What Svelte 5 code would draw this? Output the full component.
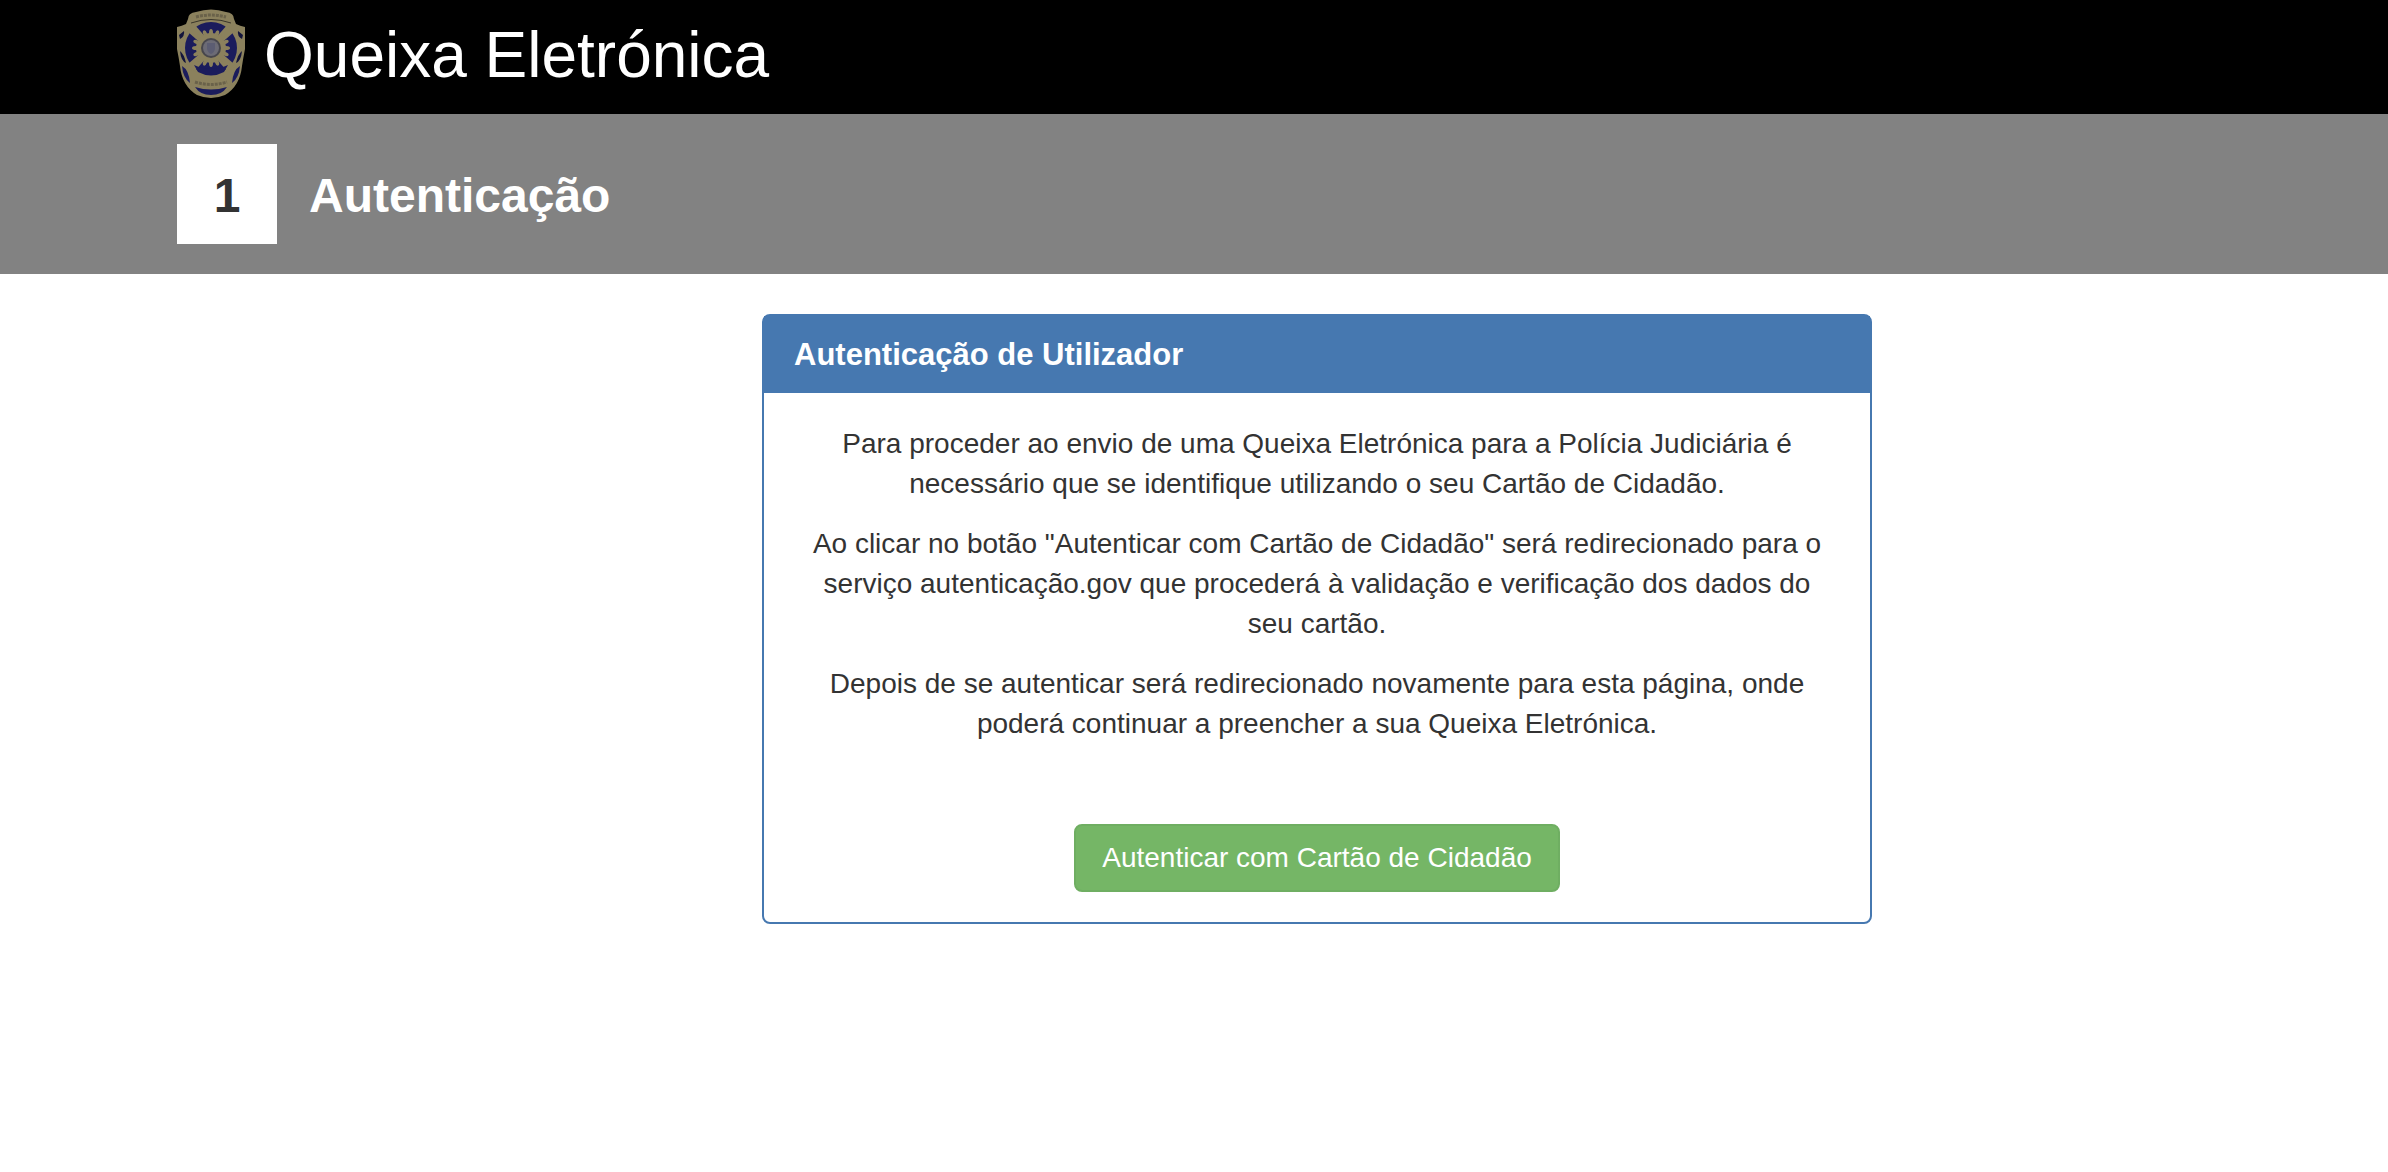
<script lang="ts">
  const step = { number: 1, title: 'Autenticação' };

  const paragraphs: string[] = [
    'Para proceder ao envio de uma Queixa Eletrónica para a Polícia Judiciária é necessário que se identifique utilizando o seu Cartão de Cidadão.',
    'Ao clicar no botão "Autenticar com Cartão de Cidadão" será redirecionado para o serviço autenticação.gov que procederá à validação e verificação dos dados do seu cartão.',
    'Depois de se autenticar será redirecionado novamente para esta página, onde poderá continuar a preencher a sua Queixa Eletrónica.'
  ];

  // Angles of the rosette in the middle of the badge
  const arms = [45, 135, 225, 315];
  const petals = Array.from({ length: 16 }, (_, i) => i * 22.5);
</script>

<svelte:head>
  <title>Queixa Eletrónica</title>
</svelte:head>

<header class="navbar">
  <svg class="badge" viewBox="0 0 70 90" aria-hidden="true">
    <path
      d="M12 11 Q12 5 20 4 Q35 -1 50 4 Q58 5 58 11 L60 16 Q64 18 69 19 L69 41 Q67 51 66 58 Q64 78 49 87 Q35 93 21 87 Q6 78 4 58 Q3 51 1 41 L1 19 Q6 18 10 16 Z"
      fill="#8b815d"
    />
    <!-- Shield field and rosette -->
    <ellipse cx="35" cy="40" rx="26" ry="26" fill="#1b1c5c" />
    <g fill="#8b815d">
      {#each arms as angle}
        <path d="M31 26 L30 12 L40 12 L39 26 Z" transform="rotate({angle} 35 40)" />
      {/each}
      {#each petals as angle}
        <ellipse cx="35" cy="25" rx="2" ry="4" transform="rotate({angle} 35 40)" />
      {/each}
      <circle cx="35" cy="40" r="15" />
    </g>
    <circle cx="35" cy="40" r="10" fill="#47464c" />
    <circle cx="35" cy="40" r="8" fill="#6c6b75" />
    <path d="M31 35 H39 V41 Q38 45 35 46 Q32 45 31 41 Z" fill="#5c5d72" />
    <!-- Banners -->
    <path d="M20 9 Q35 5 50 9" fill="none" stroke="#6a624a" stroke-width="3" stroke-dasharray="3 1" />
    <path d="M15 15 Q35 8 55 15" fill="none" stroke="#39352a" stroke-width="1" />
    <path d="M9 58 Q35 76 61 58 L59 76 Q35 84 11 76 Z" fill="#8b815d" />
    <path d="M18 57 Q35 65 52 57 L48 64 Q35 71 22 64 Z" fill="#1b1c5c" />
    <path d="M19 74 Q35 79 51 74" fill="none" stroke="#6a624a" stroke-width="3" stroke-dasharray="3 1" />
    <path d="M19 79 Q35 84 51 79 Q46 87 35 87 Q24 87 19 79 Z" fill="#1b1c5c" />
    <!-- Side openings -->
    <path d="M3 27 L8 23 Q9 28 4 31 Z M67 27 L62 23 Q61 28 66 31 Z" fill="#14153c" />
    <path d="M4 43 Q8 46 10 55 Q5 53 4 43 Z M66 43 Q62 46 60 55 Q65 53 66 43 Z" fill="#14153c" />
    <path d="M6 58 Q13 62 14 75 Q7 70 6 58 Z M64 58 Q57 62 56 75 Q63 70 64 58 Z" fill="#1b1c5c" />
  </svg>
  <h1>Queixa Eletrónica</h1>
</header>

<section class="step">
  <span class="step-number">{step.number}</span>
  <h2>{step.title}</h2>
</section>

<main>
  <section class="panel">
    <div class="panel-heading">
      <h3>Autenticação de Utilizador</h3>
    </div>
    <div class="panel-body">
      {#each paragraphs as text}
        <p>{text}</p>
      {/each}
      <button type="button" class="btn">Autenticar com Cartão de Cidadão</button>
    </div>
  </section>
</main>

<style>
  :global(body) {
    background-color: #fff;
    color: #333;
    font-family: 'Liberation Sans', Arial, sans-serif;
    font-size: 28px;
    line-height: 40px;
  }

  h1,
  h2,
  h3,
  p {
    margin: 0;
  }

  .navbar {
    display: flex;
    align-items: flex-start;
    gap: 18px;
    padding: 8px 176px 12px;
    background-color: #000;
    color: #fff;
  }

  .badge {
    width: 70px;
    height: 90px;
    flex-shrink: 0;
  }

  .navbar h1 {
    font-size: 64px;
    font-weight: 400;
    line-height: 94px;
  }

  .step {
    display: flex;
    align-items: center;
    gap: 32px;
    padding: 30px 177px;
    background-color: #828282;
    color: #fff;
    font-size: 48px;
    font-weight: 700;
    line-height: 96px;
  }

  .step-number {
    width: 100px;
    padding-top: 4px;
    background-color: #fff;
    color: #333;
    text-align: center;
  }

  .step h2 {
    padding-top: 4px;
    font-size: 48px;
  }

  main {
    display: flex;
    padding: 40px 60px 40px 762px;
  }

  .panel {
    flex: 1;
    max-width: 1110px;
    box-sizing: border-box;
    border: 2px solid #4678b0;
    border-radius: 8px;
  }

  .panel-heading {
    padding: 20px 30px;
    background-color: #4678b0;
    color: #fff;
  }

  .panel-heading h3 {
    font-size: 31px;
    line-height: 37px;
  }

  .panel-body {
    padding: 31px 40px 30px;
    text-align: center;
  }

  .panel-body p {
    margin-bottom: 20px;
  }

  .btn {
    margin-top: 60px;
    padding: 12px 26px;
    border: 2px solid #6fae62;
    border-radius: 8px;
    background-color: #75b666;
    color: #fff;
    font: inherit;
    cursor: pointer;
    vertical-align: top;
  }

  .btn:hover {
    background-color: #64a456;
  }
</style>
